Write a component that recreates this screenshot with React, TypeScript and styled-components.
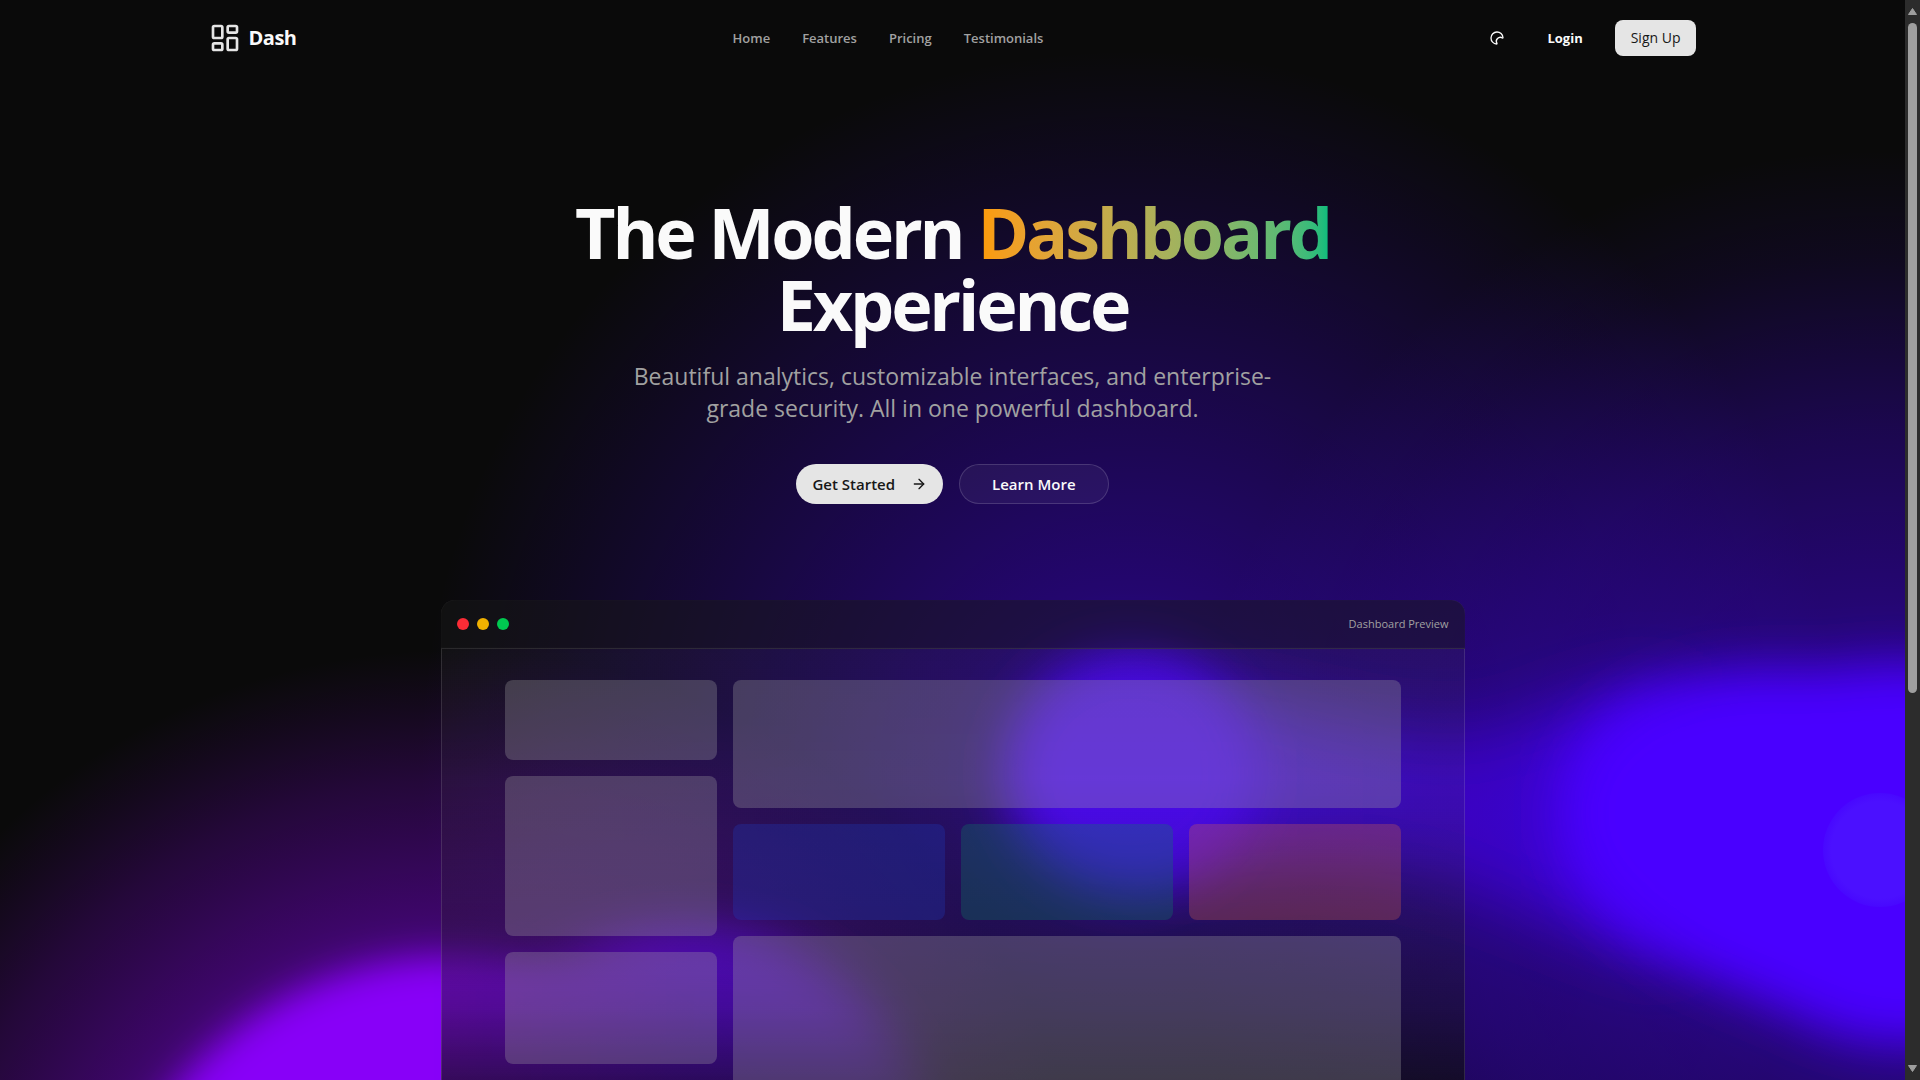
import React from "react";
import styled, { createGlobalStyle, css } from "styled-components";
import { ArrowRight, LayoutDashboard, Moon } from "lucide-react";

const GlobalStyle = createGlobalStyle`
  *, *::before, *::after { box-sizing: border-box; }
  body {
    margin: 0;
    background: #0a0a0a;
    color: #fafafa;
    font-family: "Open Sans", "Noto Sans", sans-serif;
    overflow: hidden;
  }
  h1, p { margin: 0; }
  a { color: inherit; text-decoration: none; }
  button { font: inherit; color: inherit; border: 0; background: none; padding: 0; cursor: pointer; }
`;

const Shell = styled.div`
  display: grid;
  grid-template-columns: minmax(0, 1fr) 15px;
  height: 100vh;
`;

const Viewport = styled.div`
  position: relative;
  overflow: hidden;
  isolation: isolate;
`;

const Backdrop = styled.svg`
  position: absolute;
  inset: 0;
  z-index: -1;
  width: 100%;
  height: 100%;
`;

const Header = styled.header`
  display: flex;
  align-items: center;
  justify-content: space-between;
  max-width: 1536px;
  height: 76px;
  margin: 0 auto;
  padding: 0 24px;
`;

const Brand = styled.a`
  display: flex;
  align-items: center;
  gap: 8px;
  font-size: 20px;
  font-weight: 700;
  line-height: 28px;
  letter-spacing: -0.025em;
`;

const Nav = styled.nav`
  display: flex;
  gap: 32px;
  font-size: 13px;
  font-weight: 600;
  line-height: 20px;
  color: #a1a1a1;
`;

const Actions = styled.div`
  display: flex;
  align-items: center;
  gap: 16px;
`;

const IconButton = styled.button`
  display: grid;
  place-items: center;
  width: 36px;
  height: 36px;

  svg { transform: rotate(90deg); }
`;

const NavButton = styled.button<{ $solid?: boolean }>`
  height: 36px;
  padding: 0 16px;
  border-radius: 8px;
  font-size: 13px;
  font-weight: 700;
  line-height: 20px;
  ${(p) =>
    p.$solid &&
    css`
      background: #e5e5e5;
      color: #171717;
      font-size: 14px;
      font-weight: 500;
    `}
`;

const Hero = styled.section`
  display: flex;
  flex-direction: column;
  align-items: center;
  padding: 120px 24px 96px;
  text-align: center;
`;

const Title = styled.h1`
  max-width: 896px;
  font-size: 70px;
  font-weight: 700;
  line-height: 72px;
  letter-spacing: -0.045em;
`;

const Accent = styled.span`
  background: linear-gradient(to right in oklab, #fe9a00, #00bc7d);
  background-clip: text;
  color: transparent;
`;

const Lead = styled.p`
  max-width: 672px;
  margin-top: 20px;
  font-size: 23px;
  line-height: 32px;
  color: #a1a1a1;
`;

const HeroActions = styled.div`
  display: flex;
  gap: 16px;
  margin-top: 40px;
`;

const Pill = styled.button<{ $outline?: boolean }>`
  display: flex;
  align-items: center;
  gap: 16px;
  height: 40px;
  padding: 0 16px;
  border-radius: 20px;
  background: #e5e5e5;
  color: #171717;
  font-size: 15px;
  font-weight: 600;
  line-height: 24px;
  ${(p) =>
    p.$outline &&
    css`
      padding: 0 32px;
      border: 1px solid rgba(255, 255, 255, 0.15);
      background: rgba(255, 255, 255, 0.05);
      color: #fafafa;
    `}
`;

const Preview = styled.section`
  width: 100%;
  max-width: 1024px;
  margin: 0 auto;
`;

const PreviewBar = styled.div`
  display: flex;
  align-items: center;
  justify-content: space-between;
  height: 48px;
  padding: 0 16px;
  border-radius: 14px 14px 0 0;
  background: rgba(23, 23, 23, 0.5);
  box-shadow: inset 0 0 1px rgba(255, 255, 255, 0.15);
  font-size: 11px;
  line-height: 16px;
  color: #a1a1a1;
`;

const Lights = styled.div`
  display: flex;
  gap: 8px;
`;

const Light = styled.span<{ $color: string }>`
  width: 12px;
  height: 12px;
  border-radius: 50%;
  background: ${(p) => p.$color};
`;

const PreviewBody = styled.div`
  padding: 31px 32px 96px;
  border: 1px solid rgba(255, 255, 255, 0.12);
  background:
    linear-gradient(
      rgba(10, 10, 10, 0.14),
      rgba(10, 10, 10, 0.08) 130px,
      rgba(10, 10, 10, 0.28) 290px,
      rgba(10, 10, 10, 0.42) 360px,
      rgba(10, 10, 10, 0.66) 430px
    ),
    rgba(255, 255, 255, 0.04);
`;

const Tiles = styled.div`
  display: grid;
  grid-template-columns: repeat(4, minmax(0, 1fr));
  gap: 16px;
  max-width: 896px;
  margin: 0 auto;
`;

const TileColumn = styled.div<{ $span: number }>`
  display: flex;
  flex-direction: column;
  gap: 16px;
  grid-column: span ${(p) => p.$span};
`;

const TileRow = styled.div`
  display: grid;
  grid-template-columns: repeat(3, minmax(0, 1fr));
  gap: 16px;
`;

const Tile = styled.div<{ $height: number; $tint?: string }>`
  height: ${(p) => p.$height}px;
  border-radius: 8px;
  background: ${(p) => p.$tint ?? "rgba(166, 166, 166, 0.3)"};
`;

const ScrollTrack = styled.div`
  display: flex;
  flex-direction: column;
  align-items: center;
  justify-content: space-between;
  padding: 8px 0;
  background: #2c2c2c;
`;

const Thumb = styled.div`
  width: 9px;
  height: 63%;
  margin: 8px 0 auto;
  border-radius: 5px;
  background: #9f9f9f;
`;

const Glow = () => (
  <Backdrop viewBox="0 0 1905 1080" preserveAspectRatio="none" aria-hidden="true">
    <defs>
      <radialGradient id="indigo">
        <stop offset="0" stopColor="#4800ff" stopOpacity="0.54" />
        <stop offset="0.85" stopColor="#4800ff" stopOpacity="0.08" />
        <stop offset="1" stopColor="#4800ff" stopOpacity="0" />
      </radialGradient>
      <radialGradient id="indigoWide">
        <stop offset="0" stopColor="#4800ff" stopOpacity="0.64" />
        <stop offset="0.6" stopColor="#4800ff" stopOpacity="0.28" />
        <stop offset="0.85" stopColor="#4800ff" stopOpacity="0.08" />
        <stop offset="1" stopColor="#4800ff" stopOpacity="0" />
      </radialGradient>
      <radialGradient id="purple">
        <stop offset="0.5" stopColor="#8800f8" stopOpacity="0.5" />
        <stop offset="0.8" stopColor="#8000e0" stopOpacity="0.22" />
        <stop offset="1" stopColor="#7000c0" stopOpacity="0" />
      </radialGradient>
      <linearGradient id="bridge">
        <stop offset="0" stopColor="#4800ff" stopOpacity="0.85" />
        <stop offset="0.35" stopColor="#4800ff" stopOpacity="0.6" />
        <stop offset="0.65" stopColor="#4800ff" stopOpacity="0.5" />
        <stop offset="1" stopColor="#4800ff" stopOpacity="0.9" />
      </linearGradient>
      <linearGradient id="violet" gradientUnits="userSpaceOnUse" x1="441" y1="0" x2="720" y2="0">
        <stop offset="0" stopColor="#8800f8" />
        <stop offset="1" stopColor="#6400ff" />
      </linearGradient>
      <radialGradient id="spot">
        <stop offset="0.85" stopColor="#4b10ff" />
        <stop offset="1" stopColor="#4808ff" />
      </radialGradient>
      <filter id="edge" x="-30%" y="-30%" width="160%" height="160%">
        <feGaussianBlur stdDeviation="18" />
      </filter>
      <filter id="soft" x="-40%" y="-40%" width="180%" height="180%">
        <feGaussianBlur stdDeviation="25" />
      </filter>
      <filter id="haze" x="-50%" y="-50%" width="200%" height="200%">
        <feGaussianBlur stdDeviation="34" />
      </filter>
    </defs>
    <circle cx="1130" cy="760" r="710" fill="url(#indigo)" />
    <circle cx="1880" cy="850" r="700" fill="url(#indigoWide)" />
    <circle cx="450" cy="1300" r="650" fill="url(#purple)" />
    <g fill="url(#violet)">
      <circle cx="690" cy="1170" r="240" filter="url(#soft)" />
      <circle cx="450" cy="1310" r="352" filter="url(#edge)" />
    </g>
    <path
      d="M1130 690 C1240 690 1380 740 1480 735 C1560 710 1620 685 1680 690 V960 C1600 940 1500 900 1400 870 C1300 850 1230 870 1130 870 Z"
      fill="url(#bridge)"
      filter="url(#haze)"
    />
    <ellipse cx="1130" cy="772" rx="124" ry="120" fill="#4800ff" filter="url(#soft)" />
    <path
      d="M1990 664 H1889 C1850 664 1840 672 1800 670 C1720 664 1640 680 1592 736 C1556 780 1552 840 1592 892 C1640 944 1680 968 1735 990 C1800 1014 1830 1040 1889 1044 H1990 Z"
      fill="#4800ff"
      filter="url(#soft)"
    />
    <circle cx="1880" cy="850" r="57" fill="url(#spot)" />
  </Backdrop>
);

const links = ["Home", "Features", "Pricing", "Testimonials"];

export default function App() {
  return (
    <>
      <GlobalStyle />
      <Shell>
        <Viewport>
          <Glow />
          <Header>
            <Brand href="#">
              <LayoutDashboard size={32} color="#e5e5e5" />
              Dash
            </Brand>
            <Nav>
              {links.map((label) => (
                <a key={label} href={`#${label.toLowerCase()}`}>
                  {label}
                </a>
              ))}
            </Nav>
            <Actions>
              <IconButton aria-label="Toggle theme">
                <Moon size={16} />
              </IconButton>
              <NavButton>Login</NavButton>
              <NavButton $solid>Sign Up</NavButton>
            </Actions>
          </Header>
          <main>
            <Hero>
              <Title>
                The Modern <Accent>Dashboard</Accent> Experience
              </Title>
              <Lead>
                Beautiful analytics, customizable interfaces, and enterprise-grade security. All in one powerful
                dashboard.
              </Lead>
              <HeroActions>
                <Pill>
                  Get Started <ArrowRight size={16} />
                </Pill>
                <Pill $outline>Learn More</Pill>
              </HeroActions>
            </Hero>
            <Preview>
              <PreviewBar>
                <Lights>
                  <Light $color="#fb2c36" />
                  <Light $color="#f0b100" />
                  <Light $color="#00c950" />
                </Lights>
                <span>Dashboard Preview</span>
              </PreviewBar>
              <PreviewBody>
                <Tiles>
                  <TileColumn $span={1}>
                    <Tile $height={80} />
                    <Tile $height={160} />
                    <Tile $height={112} />
                  </TileColumn>
                  <TileColumn $span={3}>
                    <Tile $height={128} />
                    <TileRow>
                      <Tile $height={96} $tint="rgba(30, 60, 190, 0.3)" />
                      <Tile $height={96} $tint="rgba(10, 130, 100, 0.3)" />
                      <Tile $height={96} $tint="rgba(215, 100, 75, 0.3)" />
                    </TileRow>
                    <Tile $height={240} />
                  </TileColumn>
                </Tiles>
              </PreviewBody>
            </Preview>
          </main>
        </Viewport>
        <ScrollTrack aria-hidden="true">
          <svg width="9" height="7" viewBox="0 0 9 7">
            <path d="M4.5 0.5 8.5 6.5H0.5Z" fill="#9f9f9f" stroke="#9f9f9f" strokeLinejoin="round" />
          </svg>
          <Thumb />
          <svg width="9" height="7" viewBox="0 0 9 7">
            <path d="M4.5 6.5 0.5 0.5H8.5Z" fill="#9f9f9f" stroke="#9f9f9f" strokeLinejoin="round" />
          </svg>
        </ScrollTrack>
      </Shell>
    </>
  );
}
